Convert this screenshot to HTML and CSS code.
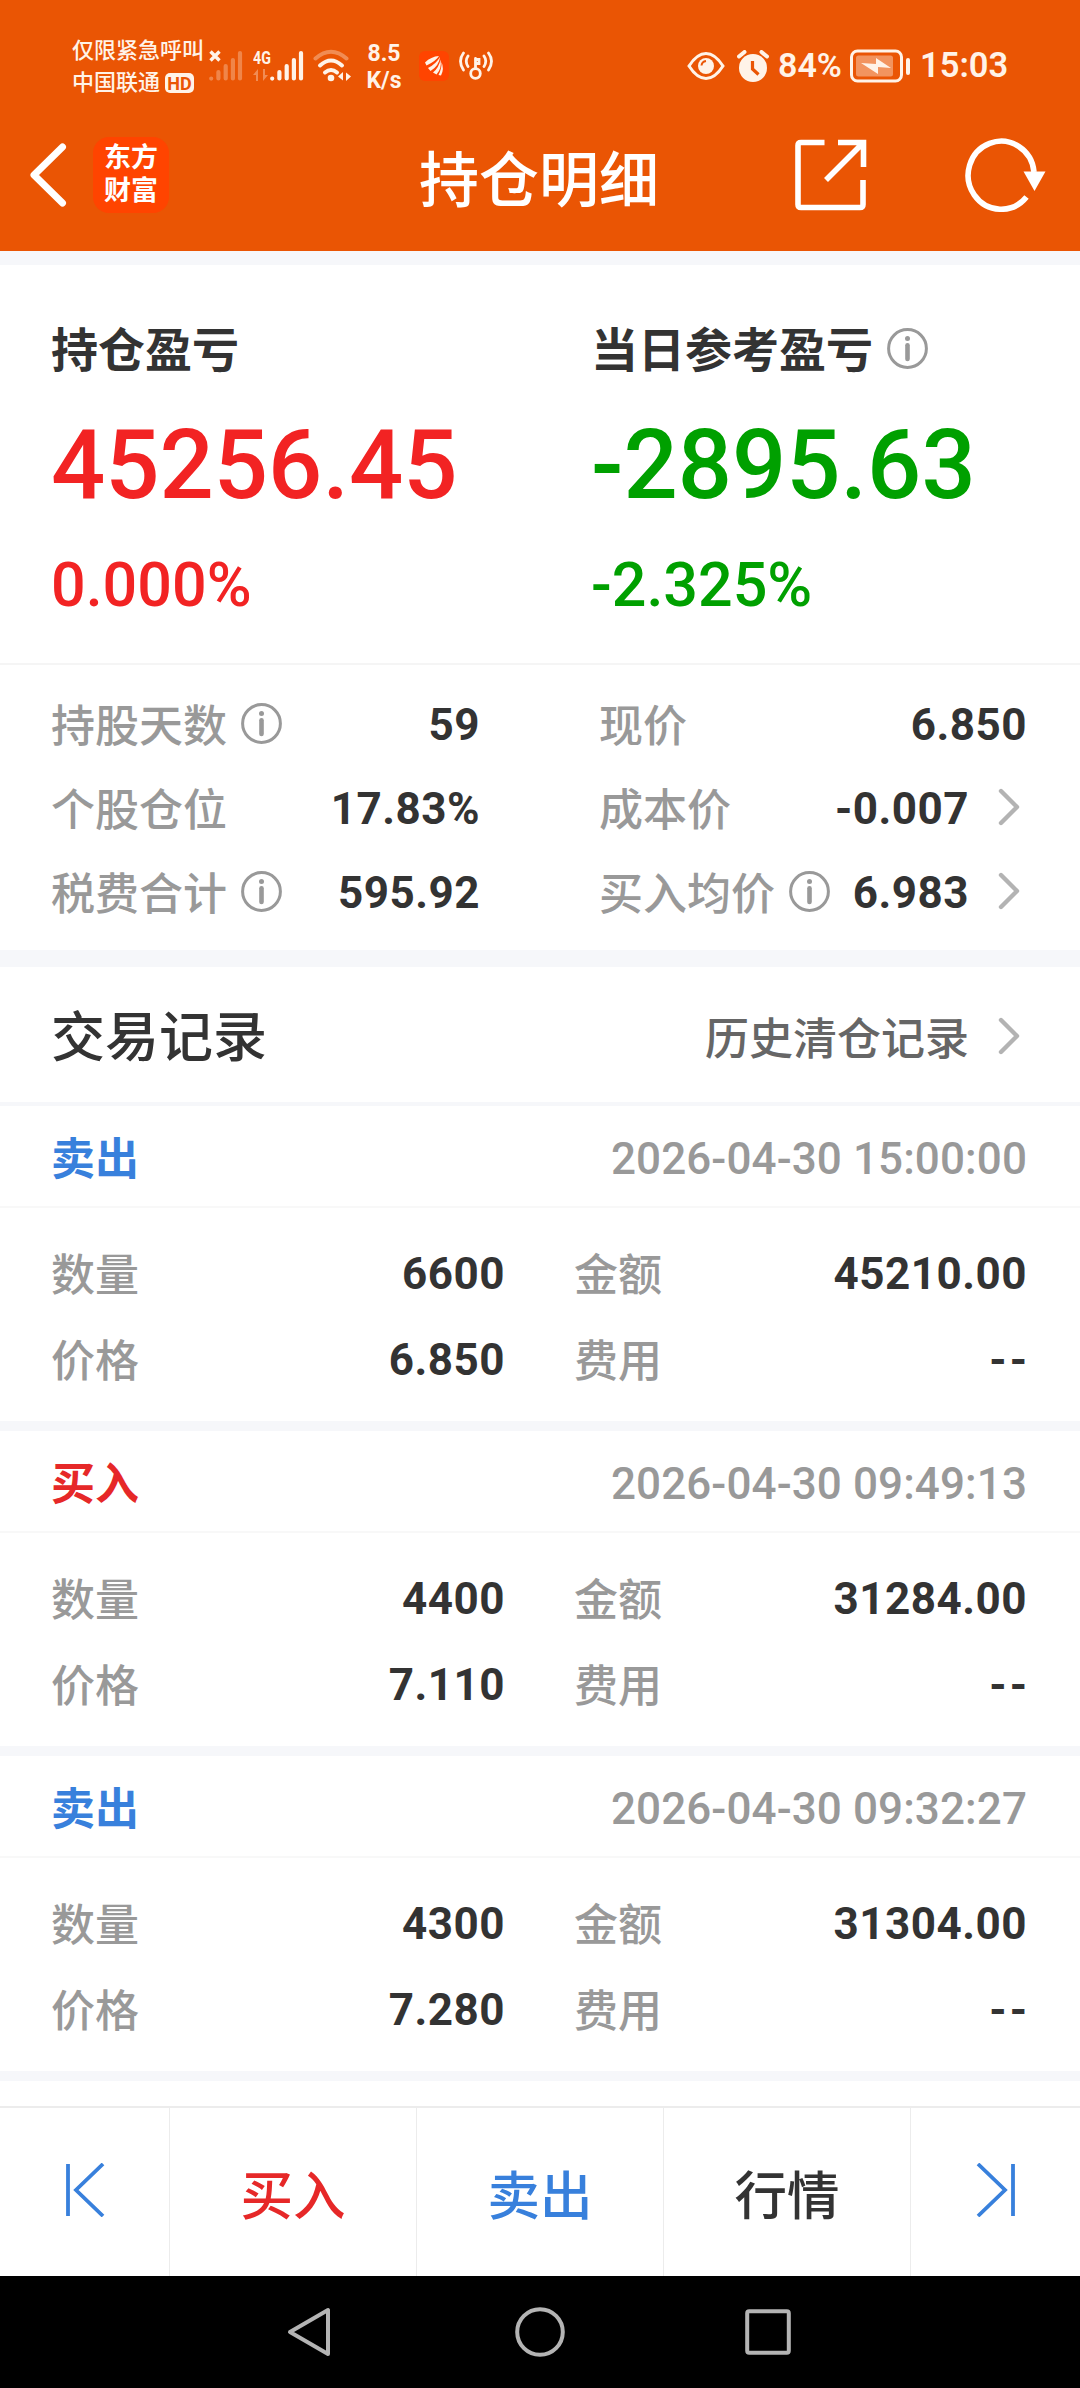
FILE: index.html
```html
<!DOCTYPE html>
<html lang="zh-CN">
<head>
    <meta charset="UTF-8">
    <meta name="viewport" content="width=device-width, initial-scale=1.0">
    <title>持仓明细</title>
    <link rel="stylesheet" href="styles.css">
</head>
<body>
    <!-- shared icons -->
    <svg class="sprite">
        <symbol id="info" viewBox="0 0 41 41">
            <circle cx="20.5" cy="20.5" r="18.9" fill="none" stroke="currentColor" stroke-width="3"/>
            <circle cx="20.5" cy="10.4" r="2.5" fill="currentColor"/>
            <path d="M20.5 17.3v13.6" stroke="currentColor" stroke-width="4.6" stroke-linecap="round"/>
        </symbol>
        <symbol id="chevron" viewBox="0 0 22 38">
            <path d="M3 3l16 16L3 35" fill="none" stroke="currentColor" stroke-width="4.4" stroke-linecap="round" stroke-linejoin="round"/>
        </symbol>
        <symbol id="signal" viewBox="0 0 34 32">
            <path d="M2.2 28.5v.1M9.4 22v6.5M16.7 16v12.5M23.9 10v18.5M31 3v25.5" fill="none" stroke="currentColor" stroke-width="4.2" stroke-linecap="round"/>
        </symbol>
    </svg>

    <div class="top">
        <div class="status-bar">
            <div class="carrier">
                <div>仅限紧急呼叫</div>
                <div>中国联通<span class="hd">HD</span></div>
            </div>
            <div class="sim sim-off">
                <svg class="bars" width="34" height="32"><use href="#signal"/></svg>
                <svg class="cross" width="12" height="12" viewBox="0 0 12 12"><path d="M1.5 1.5l9 9M10.5 1.5l-9 9" stroke="currentColor" stroke-width="3.4"/></svg>
            </div>
            <div class="sim sim-on">
                <svg class="bars" width="34" height="32"><use href="#signal"/></svg>
                <span class="net">4G</span>
                <svg class="updown" width="16" height="12" viewBox="0 0 16 12"><path d="M5 12V0L0 6h3v6zM8 0h2v12l5-6h-3V0z" fill="currentColor"/></svg>
            </div>
            <svg class="wifi" width="38" height="34" viewBox="0 0 38 34" fill="none" stroke="currentColor" stroke-width="4" stroke-linecap="round">
                <path d="M2.5 9.5Q18 -4 33.5 9.5" opacity=".35"/>
                <path d="M7 16.5Q18 6.5 29 16.5"/>
                <path d="M12 23.5Q18 18.5 24 23.5"/>
                <circle cx="18" cy="29" r="3.3" fill="currentColor" stroke="none"/>
                <path d="M30 23v8.5l-5-4zM33 32v-8.5l5 4z" fill="currentColor" stroke="none"/>
            </svg>
            <div class="speed">8.5<br>K/s</div>
            <svg class="app" width="30" height="30" viewBox="0 0 30 30">
                <rect width="30" height="30" rx="6" fill="#ff4400"/>
                <path d="M6 11.5Q12 5.500 20 5q-3 5-12.500 9.500zM9 17q8-4 12-11-1 9-9.500 14zM14 21.500q6-5 7.500-13 1.500 9-4 15zM19.500 24q3.500-7 3-13 3 7-.5 13.500z" fill="currentColor"/>
            </svg>
            <svg class="hotspot" width="34" height="30" viewBox="0 0 34 30" fill="none" stroke="currentColor" stroke-width="2.8" stroke-linecap="round">
                <circle cx="16.5" cy="22.5" r="4.8"/>
                <path d="M16.5 17.5V7.500M17 8.500h3v4h-3"/>
                <path d="M9 5q-3.500 5 0 10.500M4.500 2q-6 8 0 17M25 5q3.500 5 0 10.500M29.500 2q6 8 0 17"/>
            </svg>
            <svg class="eye" width="38" height="30" viewBox="0 0 38 30">
                <path d="M2 15Q10 2.5 19 2.5T36 15Q28 27.5 19 27.5T2 15z" fill="none" stroke="currentColor" stroke-width="3"/>
                <circle cx="19" cy="15" r="8" fill="currentColor"/>
                <path d="M14.5 14.5q.5-4 4.5-4.5" fill="none" stroke="#ea5504" stroke-width="2"/>
            </svg>
            <svg class="alarm" width="32" height="32" viewBox="0 0 32 32">
                <circle cx="16" cy="18" r="14" fill="currentColor"/>
                <path d="M2 6.5l5.5-4.5M30 6.5l-5.500-4.500" stroke="currentColor" stroke-width="4" stroke-linecap="round"/>
                <path d="M15.5 11v8l6 5.5" fill="none" stroke="#ea5504" stroke-width="3.2"/>
            </svg>
            <span class="percent">84%</span>
            <svg class="battery" width="60" height="34" viewBox="0 0 60 34">
                <rect x="1.5" y="2" width="50" height="30" rx="6" fill="none" stroke="currentColor" stroke-width="3"/>
                <rect x="6" y="6.5" width="37" height="21" rx="2.5" fill="currentColor" opacity=".4"/>
                <path d="M11 14l15 1V9l15 10-13-1v7z" fill="currentColor"/>
                <rect x="56" y="9" width="4" height="17" rx="2" fill="currentColor"/>
            </svg>
            <span class="clock">15:03</span>
        </div>
        <div class="nav">
            <svg class="back" width="38" height="64" viewBox="0 0 38 64"><path d="M33.5 4L5 32l28.5 28" fill="none" stroke="currentColor" stroke-width="7" stroke-linecap="round" stroke-linejoin="round"/></svg>
            <div class="logo">东方<br>财富</div>
            <h1>持仓明细</h1>
            <svg class="share" width="72" height="72" viewBox="0 0 72 72" fill="none" stroke="currentColor" stroke-width="5.6">
                <path d="M29.5 3.5H6q-3 0-3 3v59q0 3 3 3h59q3 0 3-3V41"/>
                <path d="M43 3.5h25.5V28M68 4L31 41"/>
            </svg>
            <svg class="refresh" width="82" height="74" viewBox="0 0 82 74">
                <path d="M61.5 59A33 34 0 1 1 69 34" fill="none" stroke="currentColor" stroke-width="5.6"/>
                <path d="M58.5 33.5h22L69.5 53z" fill="currentColor"/>
            </svg>
        </div>
    </div>

    <div class="profit">
        <div class="profit-item red">
            <h2>持仓盈亏</h2>
            <div class="amount">45256.45</div>
            <div class="rate">0.000%</div>
        </div>
        <div class="profit-item green">
            <h2>当日参考盈亏 <svg class="info"><use href="#info"/></svg></h2>
            <div class="amount">-2895.63</div>
            <div class="rate">-2.325%</div>
        </div>
    </div>

    <div class="stats">
        <div class="row"><span class="label">持股天数</span><svg class="info"><use href="#info"/></svg><span class="value">59</span></div>
        <div class="row"><span class="label">现价</span><span class="value">6.850</span></div>
        <div class="row"><span class="label">个股仓位</span><span class="value">17.83%</span></div>
        <div class="row"><span class="label">成本价</span><span class="value">-0.007</span><svg class="chevron"><use href="#chevron"/></svg></div>
        <div class="row"><span class="label">税费合计</span><svg class="info"><use href="#info"/></svg><span class="value">595.92</span></div>
        <div class="row"><span class="label">买入均价</span><svg class="info"><use href="#info"/></svg><span class="value">6.983</span><svg class="chevron"><use href="#chevron"/></svg></div>
    </div>

    <div class="trades">
        <div class="trades-head">
            <h3>交易记录</h3>
            <span class="history">历史清仓记录</span>
            <svg class="chevron"><use href="#chevron"/></svg>
        </div>

        <div class="trade">
            <div class="trade-head"><span class="side sell">卖出</span><span class="time">2026-04-30 15:00:00</span></div>
            <div class="trade-body">
                <div class="row"><span class="label">数量</span><span class="value">6600</span></div>
                <div class="row"><span class="label">金额</span><span class="value">45210.00</span></div>
                <div class="row"><span class="label">价格</span><span class="value">6.850</span></div>
                <div class="row"><span class="label">费用</span><span class="value none">--</span></div>
            </div>
        </div>

        <div class="trade">
            <div class="trade-head"><span class="side buy">买入</span><span class="time">2026-04-30 09:49:13</span></div>
            <div class="trade-body">
                <div class="row"><span class="label">数量</span><span class="value">4400</span></div>
                <div class="row"><span class="label">金额</span><span class="value">31284.00</span></div>
                <div class="row"><span class="label">价格</span><span class="value">7.110</span></div>
                <div class="row"><span class="label">费用</span><span class="value none">--</span></div>
            </div>
        </div>

        <div class="trade">
            <div class="trade-head"><span class="side sell">卖出</span><span class="time">2026-04-30 09:32:27</span></div>
            <div class="trade-body">
                <div class="row"><span class="label">数量</span><span class="value">4300</span></div>
                <div class="row"><span class="label">金额</span><span class="value">31304.00</span></div>
                <div class="row"><span class="label">价格</span><span class="value">7.280</span></div>
                <div class="row"><span class="label">费用</span><span class="value none">--</span></div>
            </div>
        </div>
    </div>

    <div class="actions">
        <div class="action sell"><svg width="40" height="54" viewBox="0 0 40 54"><path d="M3 1v52M38 1L11 27l27 26" fill="none" stroke="currentColor" stroke-width="3.8"/></svg></div>
        <div class="action buy">买入</div>
        <div class="action sell">卖出</div>
        <div class="action">行情</div>
        <div class="action sell"><svg width="40" height="54" viewBox="0 0 40 54"><path d="M37 1v52M2 1l27 26L2 53" fill="none" stroke="currentColor" stroke-width="3.8"/></svg></div>
    </div>

    <div class="system-nav">
        <svg width="44" height="50" viewBox="0 0 44 50"><path d="M41 3v44L3 25z" fill="none" stroke="currentColor" stroke-width="4" stroke-linejoin="round"/></svg>
        <svg width="50" height="50" viewBox="0 0 50 50"><circle cx="25" cy="25" r="22.8" fill="none" stroke="currentColor" stroke-width="4"/></svg>
        <svg width="46" height="46" viewBox="0 0 46 46"><rect x="2.2" y="2.2" width="41.6" height="41.6" rx="2" fill="none" stroke="currentColor" stroke-width="4"/></svg>
    </div>
</body>
</html>
```

FILE: styles.css
```css
* {
    margin: 0;
    padding: 0;
    box-sizing: border-box;
}

body {
    width: 1080px;
    height: 2388px;
    display: flex;
    flex-direction: column;
    font-family: Roboto, "Noto Sans CJK SC", sans-serif;
    font-size: 44px;
    line-height: 1.2;
    color: #333;
    background: #fff;
    overflow: hidden;
}

svg {
    display: block;
    flex-shrink: 0;
}

.sprite {
    width: 0;
    height: 0;
    position: absolute;
}

/* orange top area */
.top {
    height: 251px;
    background: #ea5504;
    color: #fff;
}

.status-bar {
    height: 131px;
    padding-left: 72px;
    display: flex;
    align-items: center;
    color: #fff3e8;
    white-space: nowrap;
}

.carrier {
    width: 137px;
    font-size: 22px;
    font-weight: 500;
    line-height: 32px;
    padding-top: 3px;
}

.carrier div {
    display: flex;
    align-items: center;
}

.hd {
    margin-left: 5px;
    width: 29px;
    height: 20px;
    border-radius: 5px;
    background: #fff3e8;
    color: #ea5504;
    font-size: 18px;
    font-weight: 700;
    line-height: 21px;
    text-align: center;
}

.sim {
    position: relative;
    height: 32px;
}

.sim-off {
    width: 34px;
}

.sim-off .bars {
    opacity: 0.3;
}

.cross {
    position: absolute;
    left: 0;
    top: 0;
}

.sim-on {
    margin-left: 10px;
    padding-left: 17px;
}

.net {
    position: absolute;
    left: 0;
    top: -2px;
    font-size: 19px;
    font-weight: 700;
    line-height: 19px;
    transform: scaleX(0.75);
    transform-origin: left;
}

.updown {
    position: absolute;
    left: 0;
    top: 19px;
    opacity: 0.35;
}

.wifi {
    margin-left: 9px;
}

.speed {
    width: 48px;
    margin-left: 9px;
    padding-top: 3px;
    font-size: 23px;
    font-weight: 700;
    line-height: 27px;
    text-align: center;
}

.app {
    margin-left: 11px;
}

.hotspot {
    margin-left: 10px;
}

.eye {
    margin-left: 194px;
}

.alarm {
    margin-left: 12px;
}

.percent {
    width: 73px;
    padding-left: 9px;
    font-size: 34px;
    font-weight: 600;
}

.battery {
    margin-left: 8px;
}

.clock {
    margin-left: 10px;
    font-size: 34.5px;
    font-weight: 600;
}

.nav {
    height: 120px;
    padding: 0 33px 33px 29px;
    display: flex;
    align-items: center;
}

.logo {
    width: 76px;
    height: 76px;
    margin-left: 26px;
    padding-top: 5px;
    border-radius: 16px;
    background: #ff4400;
    font-size: 27px;
    font-weight: 700;
    line-height: 33px;
    text-align: center;
}

h1 {
    margin-left: 250px;
    padding-top: 14px;
    font-size: 60px;
    font-weight: 500;
}

.share {
    margin-left: 136px;
}

.refresh {
    margin-left: auto;
}

/* profit summary */
.profit {
    height: 414px;
    padding: 0 51px;
    display: grid;
    grid-template-columns: 540px 1fr;
    border-top: 14px solid #f6f7fa;
    border-bottom: 2px solid #f5f5f5;
}

.profit-item {
    padding-top: 57px;
}

h2 {
    display: flex;
    align-items: center;
    gap: 14px;
    color: #333;
    font-size: 47px;
    font-weight: 700;
    line-height: 58px;
}

.info {
    width: 41px;
    height: 41px;
    color: #999;
}

h2 .info {
    margin-bottom: 6px;
}

.amount {
    margin-top: 35px;
    font-size: 95.5px;
    font-weight: 500;
    line-height: 100px;
}

.rate {
    margin-top: 35px;
    font-size: 61px;
    font-weight: 500;
    line-height: 70px;
}

.red {
    color: #f22323;
}

.green {
    color: #00a000;
}

/* label / value rows */
.row {
    display: flex;
    align-items: center;
}

.label {
    padding-top: 4px;
    color: #999;
    font-weight: 500;
}

.row .info {
    margin: 0 0 4px 14px;
}

.value {
    margin-left: auto;
    font-weight: 700;
    letter-spacing: 0.5px;
}

.none {
    margin-right: -3px;
    letter-spacing: 3px;
}

.chevron {
    width: 22px;
    height: 38px;
    margin: 0 7px 4px 29px;
    color: #b3b3b3;
}

.stats {
    height: 302px;
    padding: 18px 53px 0 51px;
    display: grid;
    grid-template-columns: 429px 428px;
    grid-auto-rows: 84px;
    justify-content: space-between;
    border-bottom: 17px solid #f6f7fa;
}

.trades-head {
    height: 139px;
    padding: 6px 53px 0 51px;
    display: flex;
    align-items: center;
    border-bottom: 4px solid #f6f7fa;
}

h3 {
    padding-top: 4px;
    font-size: 54px;
    font-weight: 500;
}

.history {
    margin-left: auto;
    padding-top: 5px;
    color: #666;
    font-weight: 500;
}

.trade {
    height: 325px;
    border-bottom: 10px solid #f6f7fa;
}

.trade-head {
    height: 102px;
    padding: 6px 53px 0 51px;
    display: flex;
    align-items: center;
    justify-content: space-between;
    border-bottom: 2px solid #f8f8f8;
}

.side {
    padding-top: 2px;
    font-weight: 700;
}

.time {
    color: #999;
    font-weight: 500;
    letter-spacing: 0.1px;
}

.trade-body {
    padding: 23px 53px 0 51px;
    display: grid;
    grid-template-columns: 454px 453px;
    grid-auto-rows: 86.5px;
    justify-content: space-between;
}

.buy {
    color: #e62828;
}

.sell {
    color: #3880dc;
}

/* bottom buttons */
.actions {
    height: 170px;
    margin-top: auto;
    display: grid;
    grid-template-columns: 170px 247px 247px 247px 169px;
    border-top: 2px solid #ececec;
}

.action {
    display: flex;
    align-items: center;
    justify-content: center;
    padding-top: 10px;
    font-size: 52.5px;
    font-weight: 500;
    border-right: 1px solid #ececec;
}

.action svg {
    margin-bottom: 14px;
}

.action:last-child {
    border-right: none;
}

.system-nav {
    height: 112px;
    padding: 0 289px 0 287px;
    display: flex;
    align-items: center;
    justify-content: space-between;
    background: #000;
    color: #b4b4b4;
}

.system-nav svg:nth-child(2) {
    margin-left: 3px;
}
```
